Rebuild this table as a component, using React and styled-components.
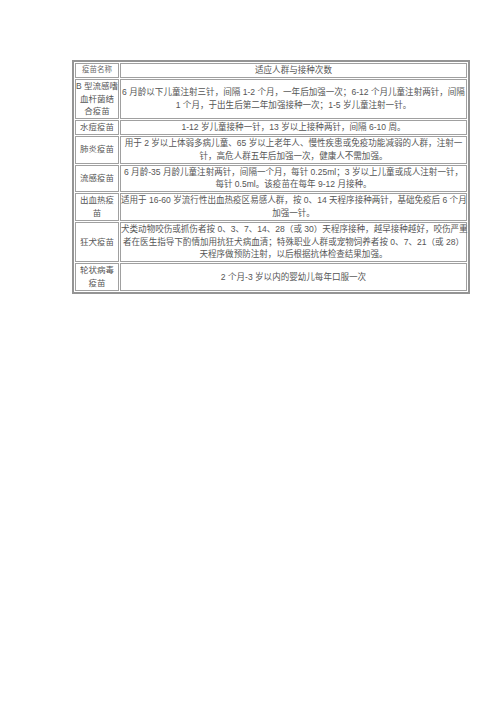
import React from 'react';
import styled, { createGlobalStyle } from 'styled-components';

const GlobalStyle = createGlobalStyle`
  html, body {
    margin: 0;
    padding: 0;
    background: #fff;
  }
`;

const Page = styled.div`
  width: 496px;
  min-height: 702px;
  padding: 60px 0 0 72px;
  box-sizing: border-box;
  font-family: "Liberation Sans", "Noto Sans CJK SC", sans-serif;
  color: #555;
`;

const Table = styled.table`
  width: 398px;
  border: 2px solid #949494;
  border-collapse: separate;
  border-spacing: 1px;
  table-layout: fixed;
`;

const Cell = styled.td`
  border: 1px solid #a0a0a0;
  padding: 0;
  text-align: center;
  vertical-align: middle;
  line-height: 12.8px;
  font-size: ${props => props.small ? '7.5px' : '8.55px'};
  color: ${props => props.small ? '#6a6a6a' : '#555'};
  white-space: nowrap;
`;

const NameCell = styled(Cell)`
  width: 42px;
  font-size: ${props => props.small ? '7.5px' : '8.5px'};
`;

const Line = styled.div`
  text-align: ${props => props.left ? 'left' : 'center'};
`;

// 疫苗与接种说明，每一行按原文断行
const vaccines = [
  {
    id: 'hib',
    name: ['B 型流感嗜', '血杆菌结', '合疫苗'],
    info: [
      '6 月龄以下儿童注射三针，间隔 1-2 个月，一年后加强一次；6-12 个月儿童注射两针，间隔',
      '1 个月，于出生后第二年加强接种一次；1-5 岁儿童注射一针。',
    ],
  },
  {
    id: 'varicella',
    name: ['水痘疫苗'],
    info: ['1-12 岁儿童接种一针，13 岁以上接种两针，间隔 6-10 周。'],
  },
  {
    id: 'pneumonia',
    name: ['肺炎疫苗'],
    info: [
      '用于 2 岁以上体弱多病儿童、65 岁以上老年人、慢性疾患或免疫功能减弱的人群，注射一',
      '针，高危人群五年后加强一次，健康人不需加强。',
    ],
  },
  {
    id: 'flu',
    name: ['流感疫苗'],
    info: [
      '6 月龄-35 月龄儿童注射两针，间隔一个月，每针 0.25ml；3 岁以上儿童或成人注射一针，',
      '每针 0.5ml。该疫苗在每年 9-12 月接种。',
    ],
  },
  {
    id: 'hfrs',
    name: ['出血热疫', '苗'],
    info: [
      '适用于 16-60 岁流行性出血热疫区易感人群，按 0、14 天程序接种两针，基础免疫后 6 个月',
      '加强一针。',
    ],
  },
  {
    id: 'rabies',
    name: ['狂犬疫苗'],
    info: [
      '犬类动物咬伤或抓伤者按 0、3、7、14、28（或 30）天程序接种，越早接种越好，咬伤严重',
      '者在医生指导下酌情加用抗狂犬病血清；特殊职业人群或宠物饲养者按 0、7、21（或 28）',
      '天程序做预防注射，以后根据抗体检查结果加强。',
    ],
  },
  {
    id: 'rotavirus',
    name: ['轮状病毒', '疫苗'],
    info: ['2 个月-3 岁以内的婴幼儿每年口服一次'],
  },
];

export default function App() {
  return (
    <Page>
      <GlobalStyle />
      <Table>
        <tbody>
          <tr>
            <NameCell small>疫苗名称</NameCell>
            <Cell>适应人群与接种次数</Cell>
          </tr>
          {vaccines.map(v => (
            <tr key={v.id}>
              <NameCell>
                {v.name.map((line, i) => (
                  <Line key={i} left={line.startsWith('B')}>{line}</Line>
                ))}
              </NameCell>
              <Cell>
                {v.info.map((line, i) => (
                  <Line key={i}>{line}</Line>
                ))}
              </Cell>
            </tr>
          ))}
        </tbody>
      </Table>
    </Page>
  );
}
